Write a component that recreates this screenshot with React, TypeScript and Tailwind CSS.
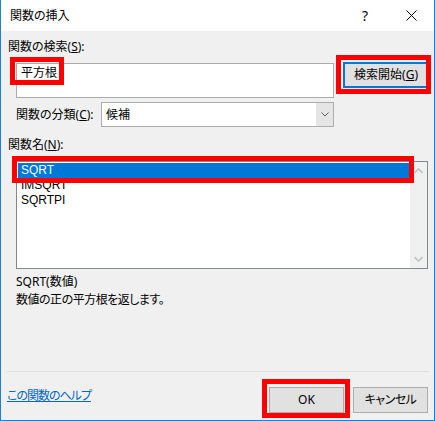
import React from 'react';

const font = '[font-family:"Noto_Sans","Noto_Sans_CJK_JP",sans-serif]';

function RedBox({ className }: { className: string }) {
  return <div className={`pointer-events-none absolute border-[5px] border-[#ff0000] ${className}`} />;
}

const items = ['SQRT', 'IMSQRT', 'SQRTPI'];

export default function App() {
  return (
    <div
      className={`flex h-[421px] w-[435px] flex-col overflow-hidden border-x border-b border-[#1a7fd6] bg-[#f0f0f0] text-[12px] leading-[16px] text-black ${font} [font-feature-settings:'palt']`}
    >
      {/* Title bar */}
      <div className="flex h-[31px] shrink-0 items-center bg-white">
        <span className="ml-[9px] flex-1 pt-[1px]">関数の挿入</span>
        <div className="flex h-full w-[46px] items-center justify-center text-[14px]">?</div>
        <div className="flex h-full w-[46px] items-center justify-center">
          <svg width="11" height="11" viewBox="0 0 11 11">
            <path d="M0.5 0.5 L10.5 10.5 M10.5 0.5 L0.5 10.5" stroke="#000" strokeWidth="1" fill="none" />
          </svg>
        </div>
      </div>

      {/* Body */}
      <div className="ml-[7px] mt-[8px] h-[16px]">
        関数の検索(<u>S</u>):
      </div>

      <div className="mt-[7px] flex items-start">
        <div className="relative ml-[15px] mt-[1px] h-[35px] w-[318px] border border-[#ababab] bg-white">
          <span className="absolute left-[4px] top-[1px] text-[12px]">平方根</span>
          <RedBox className="left-[-7px] top-[-7px] h-[28px] w-[54px]" />
        </div>
        <div className="relative ml-[9px] flex h-[26px] w-[86px] items-center justify-center border-2 border-[#0078d7] bg-[#e1e1e1]">
          検索開始(<u>G</u>)
          <RedBox className="left-[-9px] top-[-9px] h-[39px] w-[95px]" />
        </div>
      </div>

      <div className="mt-[4px] flex items-center">
        <span className="ml-[15px] w-[85px]">
          関数の分類(<u>C</u>):
        </span>
        <div className="flex h-[25px] w-[233px] items-stretch border border-[#acacac] bg-white">
          <span className="flex flex-1 items-center pl-[4px]">候補</span>
          <div className="flex w-[17px] items-center justify-center bg-[#e5e5e5]">
            <svg width="8" height="5" viewBox="0 0 8 5">
              <path d="M0.5 0.5 L4 4 L7.5 0.5" stroke="#606060" strokeWidth="1" fill="none" />
            </svg>
          </div>
        </div>
      </div>

      <div className="ml-[7px] mt-[10px] h-[16px]">
        関数名(<u>N</u>):
      </div>

      <div className="relative ml-[15px] mt-[8px] flex h-[108px] w-[412px] border border-[#828790] bg-white">
        <div className="flex flex-1 flex-col p-[1px] [font-family:'Liberation_Sans',Arial,sans-serif]">
          {items.map((it, i) => (
            <div
              key={it}
              className={`flex h-[15px] items-center pl-[3px] leading-[15px] ${i === 0 ? 'bg-[#0078d7] text-white' : ''}`}
            >
              {it}
            </div>
          ))}
        </div>
        <div className="flex w-[17px] flex-col items-center justify-between bg-[#f0f0f0] py-[6px]">
          <svg width="9" height="6" viewBox="0 0 9 6">
            <path d="M0.5 5 L4.5 1 L8.5 5" stroke="#c2c2c2" strokeWidth="1.6" fill="none" />
          </svg>
          <svg width="9" height="6" viewBox="0 0 9 6">
            <path d="M0.5 1 L4.5 5 L8.5 1" stroke="#c2c2c2" strokeWidth="1.6" fill="none" />
          </svg>
        </div>
        <RedBox className="left-[-5px] top-[-6px] h-[27px] w-[402px]" />
      </div>

      <div className="ml-[15px] mt-[5px] h-[16px]">SQRT(数値)</div>
      <div className="ml-[15px] mt-[2px] h-[16px] tracking-[-0.5px]">数値の正の平方根を返します。</div>

      <div className="ml-[6px] mt-[63px] h-px w-[422px] shrink-0 bg-[#dfdfdf]" />

      <div className="mt-[15px] flex items-start">
        <div className="ml-[6px] mt-[1px] flex-1">
          <a className="text-[#0066cc] underline tracking-[-1px]">この関数のヘルプ</a>
        </div>
        <div className="relative flex h-[26px] w-[75px] items-center justify-center border border-[#adadad] bg-[#e1e1e1]">
          OK
          <RedBox className="left-[-8px] top-[-9px] h-[39px] w-[88px]" />
        </div>
        <div className="ml-[9px] mr-[6px] flex h-[26px] w-[75px] items-center justify-center border border-[#adadad] bg-[#e1e1e1] tracking-[-0.5px]">
          キャンセル
        </div>
      </div>
    </div>
  );
}
